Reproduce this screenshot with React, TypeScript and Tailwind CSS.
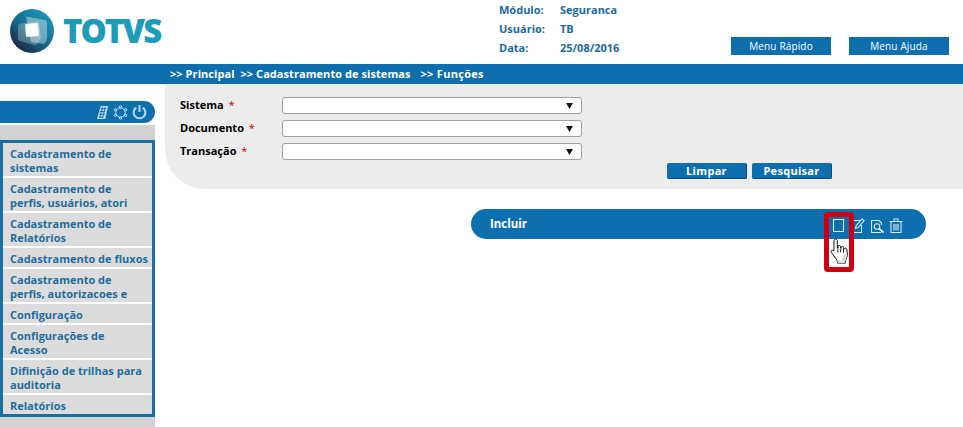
const FONT = "font-['Open_Sans',sans-serif]";

const MENU = [
  ["Cadastramento de", "sistemas"],
  ["Cadastramento de", "perfis, usuários, atori"],
  ["Cadastramento de", "Relatórios"],
  ["Cadastramento de fluxos"],
  ["Cadastramento de", "perfis, autorizacoes e"],
  ["Configuração"],
  ["Configurações de", "Acesso"],
  ["Difinição de trilhas para", "auditoria"],
  ["Relatórios"],
];

const FIELDS = ["Sistema", "Documento", "Transação"];

const INFO = [
  ["Módulo:", "Seguranca"],
  ["Usuário:", "TB"],
  ["Data:", "25/08/2016"],
];

function Logo() {
  return (
    <svg width="46" height="46" viewBox="0 0 46 46">
      <defs>
        <linearGradient id="ball" x1="0.85" y1="0.1" x2="0.2" y2="0.95">
          <stop offset="0" stopColor="#1a94b6" />
          <stop offset="0.5" stopColor="#156f90" />
          <stop offset="1" stopColor="#1d2442" />
        </linearGradient>
        <radialGradient id="core" r="0.75">
          <stop offset="0" stopColor="#ffffff" />
          <stop offset="0.7" stopColor="#ffffff" stopOpacity="0.95" />
          <stop offset="1" stopColor="#ffffff" stopOpacity="0.45" />
        </radialGradient>
      </defs>
      <circle cx="23" cy="23" r="22" fill="url(#ball)" />
      <path d="M17 8.5 L36 12 Q38 12.5 38 15 L38 29 Q38 33 35 36 L22 34 Z" fill="#ffffff" fillOpacity="0.38" />
      <path d="M9 19 Q9 16 12 15.5 L30 13 L32 30 L27 37.5 L11 33 Q9 32.5 9 30 Z" fill="#ffffff" fillOpacity="0.25" />
      <path d="M16 16 L29 15 L30 28 L17 29 Z" fill="url(#core)" />
    </svg>
  );
}

function Hand() {
  return (
    <svg width="20" height="27" viewBox="0 0 20 27">
      <path
        d="M5.5 1c1.1 0 1.8.8 1.8 1.8V10l.7-.1V8.8c0-1.8 2.6-1.8 2.7 0v1.3l.5.1V9.7c0-1.6 2.5-1.6 2.6 0V11l.5.2c.2-1.4 2.6-1.2 2.6.5l.4 4.7c.1 2-.6 3.2-1.2 4.4l-1 4.6H7.6l-.6-3.2L1.4 14.6c-1.2-1.4.5-3.3 2-2.1l.5.5.1-10.2C4 1.8 4.6 1 5.5 1Z"
        fill="#ffffff"
        stroke="#111111"
        strokeWidth="1"
        strokeLinejoin="round"
      />
      <path d="M7.5 21.5L15 25.5L7.6 25.5Z" fill="#d5d5d5" />
      <path d="M13 18L16.5 14.5L16.5 18.5L15 24.5L11 24.5Z" fill="#dedede" />
      <path d="M7.8 10.5v4M10.7 10.5v4M13.6 11v4" stroke="#222222" strokeWidth="1" />
    </svg>
  );
}

function PencilIcon() {
  return (
    <svg width="13" height="15" viewBox="0 0 13 15" fill="none" stroke="#d8e7f2" strokeWidth="1.1">
      <path d="M8 2.5H0.5V14.5H9.5V7" />
      <path d="M3.5 10.5L4 8L10 1L12.2 2.6L6 9.6Z" />
    </svg>
  );
}

function SearchDocIcon() {
  return (
    <svg width="14" height="13" viewBox="0 0 14 13" fill="none" stroke="#d8e7f2" strokeWidth="1.1">
      <path d="M10 12.5H0.5V0.5H8L10.5 3V5" />
      <circle cx="6" cy="6.5" r="2.8" />
      <path d="M8 8.5L12.5 12.5" strokeWidth="2" />
    </svg>
  );
}

function TrashIcon() {
  return (
    <svg width="14" height="15" viewBox="0 0 14 15" fill="none" stroke="#d8e7f2" strokeWidth="1.1">
      <path d="M0.5 3.5H13.5M5 3.5V1H9V3.5M2 3.5V14.5H12V3.5" />
      <path d="M5 6V12.5M7 6V12.5M9 6V12.5" />
    </svg>
  );
}

function SidebarIcons() {
  return (
    <div className="flex items-center gap-[4px]">
      <svg width="13" height="15" viewBox="0 0 14 16">
        <path d="M5 1H13L10 15H1Z" fill="#c4dcec" />
        <path d="M5 4H11M4 7H10M3.5 10H9.5M3 13H8M7 2L4 14M10 2L7 14" stroke="#0e6fae" strokeWidth="1" />
      </svg>
      <svg width="15" height="15" viewBox="0 0 16 16" fill="none" stroke="#d8e7f2" strokeWidth="1">
        <circle cx="8" cy="8" r="5" />
        <circle cx="8" cy="2" r="1.2" fill="#0e6fae" />
        <circle cx="8" cy="14" r="1.2" fill="#0e6fae" />
        <circle cx="2.5" cy="5" r="1.2" fill="#0e6fae" />
        <circle cx="13.5" cy="5" r="1.2" fill="#0e6fae" />
        <circle cx="2.5" cy="11" r="1.2" fill="#0e6fae" />
        <circle cx="13.5" cy="11" r="1.2" fill="#0e6fae" />
      </svg>
      <svg width="15" height="16" viewBox="0 0 16 16" fill="none" stroke="#b4d6ec" strokeWidth="2.2">
        <path d="M4.5 3.4a6.2 6.2 0 1 0 7 0" />
        <path d="M8 0.5V8" />
      </svg>
    </div>
  );
}

export default function App() {
  return (
    <div className={`w-[963px] h-[427px] overflow-hidden bg-white ${FONT}`}>
      <header className="h-[64px] flex">
        <div className="w-[499px] flex items-center pl-[9px] pb-[3px] gap-[8px]">
          <Logo />
          <span className="text-[33px] leading-none font-extrabold text-[#1b9cb9] tracking-[-2px]">TOTVS</span>
        </div>
        <div className="w-[232px] pt-[2px] flex flex-col gap-[3px]">
          {INFO.map(([label, value]) => (
            <div key={label} className="flex h-[16px] items-center text-[11px] font-bold text-[#1a6aa0]">
              <span className="w-[61px]">{label}</span>
              <span>{value}</span>
            </div>
          ))}
        </div>
        <div className="pt-[37px] flex gap-[18px]">
          {["Menu Rápido", "Menu Ajuda"].map((label) => (
            <button key={label} className="w-[100px] h-[18px] bg-[#0e6fae] text-white text-[10px] leading-none tracking-[0.15px]">
              {label}
            </button>
          ))}
        </div>
      </header>

      <div className="h-[20px] bg-[#0e6fae] pl-[170px] flex items-center text-white text-[11px] font-bold whitespace-pre tracking-[0.06px]">
        <span>{">> Principal  >> Cadastramento de sistemas"}</span>
        <span className="ml-[10px] tracking-[0.3px]">{">> Funções"}</span>
      </div>

      <div className="flex h-[343px]">
        <aside className="w-[155px] shrink-0 flex flex-col">
          <div className="h-[17px]" />
          <div className="h-[22px] bg-[#0e6fae] rounded-r-full flex items-center justify-end pr-[8px]">
            <SidebarIcons />
          </div>
          <div className="h-[2px]" />
          <div className="flex-1 bg-[#d2d2d2] pt-[15px]">
            <nav className="border-[3px] border-[#1b6f9f] bg-white flex flex-col gap-[2px]">
              {MENU.map((lines) => (
                <a key={lines.join()} className="block bg-[#dcdcdc] pl-[7px] pt-[4px] pb-[1px] text-[11px] leading-[14px] font-bold text-[#1f6c9c] whitespace-nowrap">
                  {lines.map((line) => (
                    <div key={line}>{line}</div>
                  ))}
                </a>
              ))}
            </nav>
          </div>
        </aside>

        <main className="flex-1 pl-[10px]">
          <section className="h-[105px] bg-[#ececec] rounded-bl-[40px] pl-[15px] pt-[12px]">
            <div className="flex flex-col gap-[4px]">
              {FIELDS.map((field) => (
                <div key={field} className="flex items-center h-[19px]">
                  <label className="w-[102px] text-[11px] font-bold text-black">
                    {field} <span className="text-[#cc0000] ml-[2px] font-normal">*</span>
                  </label>
                  <div className="w-[300px] h-[17px] bg-white border border-[#a0a0a0] rounded-[3px] flex items-center justify-end pr-[8px]">
                    <svg width="7" height="6" viewBox="0 0 8 7">
                      <path d="M0 0H8L4 7Z" fill="#111111" />
                    </svg>
                  </div>
                </div>
              ))}
            </div>
            <div className="flex gap-[5px] ml-[487px] mt-[2px]">
              {["Limpar", "Pesquisar"].map((label) => (
                <button key={label} className="w-[80px] h-[16px] bg-[#0e6fae] rounded-[2px] border-b border-r border-[#0a4f7e] text-white text-[11px] leading-none font-bold tracking-[0.3px]">
                  {label}
                </button>
              ))}
            </div>
          </section>

          <div className="pl-[306px] pt-[20px]">
            <div className="relative w-[455px] h-[30px] bg-[#0e6fae] rounded-full pl-[19px] pr-[23px] flex items-center justify-between">
              <span className="text-white text-[11.5px] font-bold">Incluir</span>
              <div className="flex items-start h-[14px] mt-[2px]">
                <div className="w-[11px] h-[13px] mt-[1px] border border-[#e6f0f7] mr-[8px]" />
                <PencilIcon />
                <div className="mt-[2px] ml-[6px] mr-[4px]">
                  <SearchDocIcon />
                </div>
                <TrashIcon />
              </div>
              <div className="absolute left-[353px] top-[3px] w-[30px] h-[60px] border-[5px] border-[#cc0010] rounded-[4px]" />
              <div className="absolute left-[359px] top-[29px]">
                <Hand />
              </div>
            </div>
          </div>
        </main>
      </div>
    </div>
  );
}
